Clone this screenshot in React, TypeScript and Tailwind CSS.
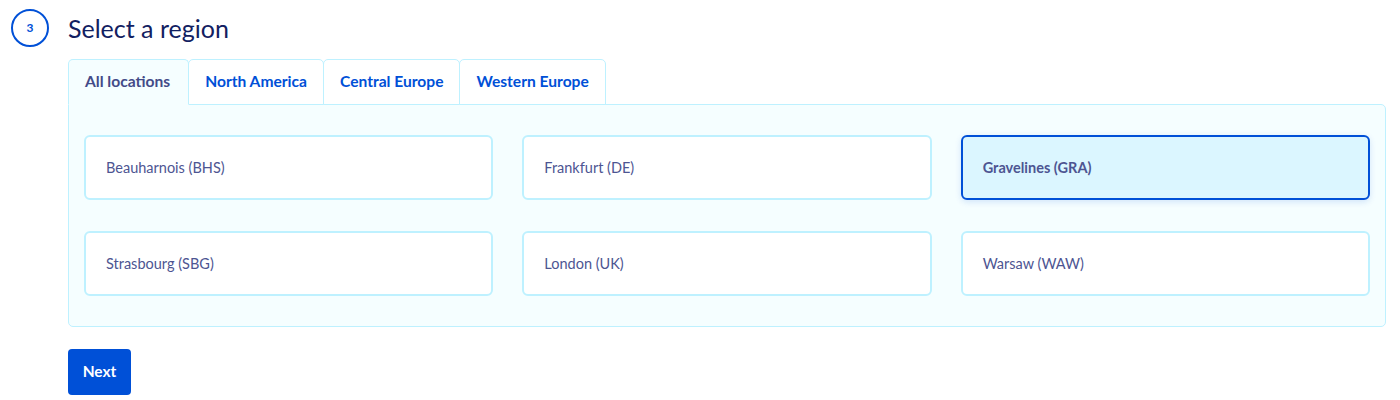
import React, { useState } from 'react';

const tabs = ['All locations', 'North America', 'Central Europe', 'Western Europe'];

const regions = [
  'Beauharnois (BHS)',
  'Frankfurt (DE)',
  'Gravelines (GRA)',
  'Strasbourg (SBG)',
  'London (UK)',
  'Warsaw (WAW)',
];

const App: React.FC = () => {
  const [activeTab, setActiveTab] = useState(0);
  const [selected, setSelected] = useState('Gravelines (GRA)');

  return (
    <div
      className="w-[1400px] h-[400px] bg-white flex pl-[11px] pr-[14px] pt-[9px]"
      style={{ fontFamily: 'Lato, "Open Sans", sans-serif' }}
    >
      {/* step number */}
      <div className="w-[38px] h-[38px] shrink-0 rounded-full border-2 border-[#0050d7] flex items-center justify-center text-[12px] font-bold text-[#0050d7]">
        3
      </div>

      <div className="flex-1 ml-[19px]">
        <h2 className="text-[25px] leading-[38px] text-[#122061]">Select a region</h2>

        {/* tabs */}
        <div className="flex mt-[12px]">
          {tabs.map((tab, i) => (
            <button
              key={tab}
              onClick={() => setActiveTab(i)}
              className={`h-[46px] px-[16px] rounded-t-[5px] border border-[#bef1ff] text-[15.6px] font-bold -ml-px first:ml-0 ${
                activeTab === i
                  ? 'bg-[#f5feff] border-b-[#f5feff] text-[#434b88] relative z-10 pr-[18px]'
                  : 'bg-white text-[#0050d7]'
              }`}
            >
              {tab}
            </button>
          ))}
        </div>

        {/* region cards */}
        <div className="-mt-px bg-[#f5feff] border border-[#bef1ff] rounded-b-[5px] rounded-tr-[5px] px-[15px] pt-[30px] pb-[30px] grid grid-cols-3 gap-x-[29px] gap-y-[31px]">
          {regions.map((r) => (
            <button
              key={r}
              onClick={() => setSelected(r)}
              className={`h-[65px] rounded-[6px] border-2 text-left pl-[20px] text-[14.5px] text-[#4d5592] ${
                selected === r
                  ? 'bg-[#dbf6ff] border-[#0050d7] font-bold shadow-[0_2px_6px_rgba(0,80,215,0.15)]'
                  : 'bg-white border-[#bef1ff]'
              }`}
            >
              {r}
            </button>
          ))}
        </div>

        <button className="mt-[22px] h-[46px] w-[63px] rounded-[4px] bg-[#0050d7] text-white text-[15.5px] font-bold">
          Next
        </button>
      </div>
    </div>
  );
};

export default App;
